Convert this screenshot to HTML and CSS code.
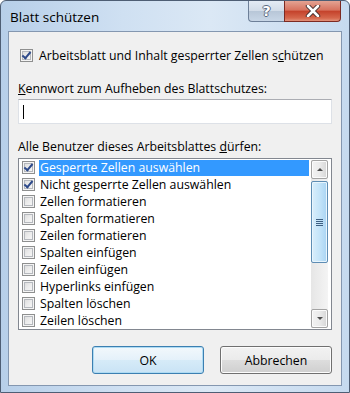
FILE: index.html
```html
<!DOCTYPE html>
<html lang="de">
<head>
    <meta charset="UTF-8">
    <title>Blatt schützen</title>
    <link rel="stylesheet" href="styles.css">
</head>
<body>
<div class="window">
    <div class="titlebar">
        <span class="title">Blatt schützen</span>
        <div class="caption">
            <div class="cap-btn cap-help">?</div>
            <div class="cap-btn cap-close">
                <svg width="18" height="12" viewBox="0 0 18 12">
                    <path d="M4 1 L14 11 M14 1 L4 11" stroke="#3b2a2a" stroke-width="4.4" stroke-linecap="round"/>
                    <path d="M4 1 L14 11 M14 1 L4 11" stroke="#fff" stroke-width="2.6" stroke-linecap="round"/>
                </svg>
            </div>
        </div>
    </div>

    <div class="client">
        <div class="check-row">
            <span class="chk checked"></span>
            <span>Arbeitsblatt und Inhalt gesperrter Zellen s<u>c</u>hützen</span>
        </div>

        <div class="label label-pass"><u>K</u>ennwort zum Aufheben des Blattschutzes:</div>
        <div class="textbox"><span class="caret"></span></div>

        <div class="label label-list">Alle Benutzer dieses Arbeitsblattes <u>d</u>ürfen:</div>
        <div class="listbox">
            <div class="items">
                <div class="item"><span class="chk checked"></span><span class="item-text selected">Gesperrte Zellen auswählen</span></div>
                <div class="item"><span class="chk checked"></span><span class="item-text">Nicht gesperrte Zellen auswählen</span></div>
                <div class="item"><span class="chk"></span><span class="item-text">Zellen formatieren</span></div>
                <div class="item"><span class="chk"></span><span class="item-text">Spalten formatieren</span></div>
                <div class="item"><span class="chk"></span><span class="item-text">Zeilen formatieren</span></div>
                <div class="item"><span class="chk"></span><span class="item-text">Spalten einfügen</span></div>
                <div class="item"><span class="chk"></span><span class="item-text">Zeilen einfügen</span></div>
                <div class="item"><span class="chk"></span><span class="item-text">Hyperlinks einfügen</span></div>
                <div class="item"><span class="chk"></span><span class="item-text">Spalten löschen</span></div>
                <div class="item"><span class="chk"></span><span class="item-text">Zeilen löschen</span></div>
            </div>
            <div class="scrollbar">
                <div class="sb-btn sb-up"><span class="arrow-up"></span></div>
                <div class="sb-thumb"><span class="grip"></span></div>
                <div class="sb-track"></div>
                <div class="sb-btn sb-down"><span class="arrow-down"></span></div>
            </div>
        </div>

        <div class="buttons">
            <div class="btn btn-default">OK</div>
            <div class="btn">Abbrechen</div>
        </div>
    </div>
</div>
</body>
</html>
```

FILE: styles.css
```css
* {
    box-sizing: border-box;
}

body {
    margin: 0;
    background: #fff;
    font-family: "Open Sans", "Noto Sans", sans-serif;
    font-size: 12.3px;
    color: #000;
}

.window {
    width: 350px;
    height: 393px;
    border: 1px solid #4e5e74;
    border-radius: 6px 6px 0 0;
    background: linear-gradient(to right, #b7cfe9 0%, #cfe0f2 35%, #dbe8f5 60%, #c6daef 100%);
    padding: 0 7px 6px 7px;
    display: flex;
    flex-direction: column;
}

/* titelleiste */
.titlebar {
    height: 30px;
    display: flex;
    justify-content: space-between;
    align-items: flex-start;
}

.title {
    margin: 7px 0 0 2px;
    font-size: 13.5px;
    color: #000;
}

.caption {
    display: flex;
    margin-right: 1px;
}

.cap-btn {
    height: 21px;
    display: flex;
    align-items: center;
    justify-content: center;
    border: 1px solid #6d7f98;
    border-top: none;
}

.cap-help {
    width: 36px;
    border-radius: 0 0 0 4px;
    border-right: none;
    background: linear-gradient(#e3ebf4 0%, #d2dce8 48%, #b8c7d8 52%, #c8d6e6 100%);
    color: #fff;
    font-family: "DejaVu Sans", sans-serif;
    font-weight: bold;
    font-size: 14px;
    text-shadow: -1px 0 #5a6a80, 1px 0 #5a6a80, 0 -1px #5a6a80, 0 1px #5a6a80;
}

.cap-close {
    width: 57px;
    border-radius: 0 0 4px 0;
    border-color: #7c2a22;
    background: linear-gradient(#e4a393 0%, #d7735f 45%, #c5432c 52%, #d5674c 85%, #e2917a 100%);
}

/* fensterinhalt */
.client {
    flex: 1;
    background: #f0f0f0;
    border: 1px solid #8497b0;
    padding: 0 9px 0 9px;
    display: flex;
    flex-direction: column;
}

.check-row {
    display: flex;
    align-items: center;
    height: 17px;
    margin-top: 15px;
    padding-left: 2px;
}

.check-row .chk {
    margin-right: 6px;
}

.chk {
    width: 13px;
    height: 13px;
    flex: none;
    border: 1px solid #8e8f8f;
    background: linear-gradient(135deg, #d6d6d6 0%, #ececec 50%, #fafafa 100%);
    box-shadow: inset 0 0 0 1px #f4f4f4, inset 0 0 0 2px #b5b8bd;
    position: relative;
}

.chk.checked::after {
    content: "";
    position: absolute;
    left: 3px;
    top: 0px;
    width: 3px;
    height: 7px;
    border: solid #2e4a8a;
    border-width: 0 2px 2px 0;
    transform: rotate(40deg);
}

.label {
    height: 17px;
    line-height: 17px;
}

.label-pass {
    margin-top: 16px;
}

.textbox {
    height: 25px;
    margin-top: 2px;
    background: #fff;
    border: 1px solid #dde1e7;
    border-top-color: #abadb3;
    padding: 5px 0 0 4px;
}

.caret {
    display: block;
    width: 1px;
    height: 14px;
    background: #000;
}

.label-list {
    margin-top: 14px;
}

.listbox {
    margin-top: 3px;
    height: 172px;
    background: #fff;
    border: 1px solid #828790;
    display: flex;
}

.items {
    flex: 1;
    display: flex;
    flex-direction: column;
}

.item {
    height: 17px;
    display: flex;
    align-items: center;
    padding-left: 3px;
}

.item .chk {
    margin-right: 4px;
}

.item-text {
    flex: 1;
    height: 16px;
    line-height: 16px;
    padding-left: 1px;
    margin-right: 2px;
}

.item-text.selected {
    background: #3399ff;
    color: #fff;
}

/* bildlaufleiste */
.scrollbar {
    width: 17px;
    margin: 1px 3px 1px 0;
    display: flex;
    flex-direction: column;
    background: linear-gradient(to right, #e6e6e6, #f4f4f4);
}

.sb-btn {
    height: 19px;
    border: 1px solid #a3a3a3;
    border-radius: 2px;
    background: linear-gradient(to right, #f2f2f2 0%, #ebebeb 50%, #d6d6d6 100%);
    box-shadow: inset 0 0 0 1px #fbfbfb;
    display: flex;
    align-items: center;
    justify-content: center;
}

.arrow-up,
.arrow-down {
    width: 0;
    height: 0;
    border-left: 3px solid transparent;
    border-right: 3px solid transparent;
}

.arrow-up {
    border-bottom: 3px solid #4d4d4d;
}

.arrow-down {
    border-top: 3px solid #4d4d4d;
}

.sb-thumb {
    height: 82px;
    margin-top: 2px;
    border: 1px solid #5e8db4;
    border-radius: 2px;
    background: linear-gradient(to right, #d9eefb 0%, #c4e4f9 50%, #a9d4f3 100%);
    box-shadow: inset 0 0 0 1px #e8f5fd;
    display: flex;
    align-items: center;
    justify-content: center;
}

.grip {
    width: 7px;
    height: 7px;
    background: repeating-linear-gradient(#3d5f82 0 1px, transparent 1px 2px);
}

.sb-track {
    flex: 1;
}

/* schaltflächen */
.buttons {
    display: flex;
    justify-content: flex-end;
    gap: 16px;
    margin-top: 16px;
}

.btn {
    width: 112px;
    height: 28px;
    border: 1px solid #707070;
    border-radius: 3px;
    background: linear-gradient(#f2f2f2 0%, #ebebeb 50%, #dddddd 51%, #cfcfcf 100%);
    box-shadow: inset 0 0 0 1px #fcfcfc;
    display: flex;
    align-items: center;
    justify-content: center;
}

.btn-default {
    border-color: #3c7fb1;
    background: linear-gradient(#f2f8fc 0%, #e4f1fa 50%, #d6ebf8 51%, #c9e3f5 100%);
    box-shadow: inset 0 0 0 1px #aedbf3;
}
```
